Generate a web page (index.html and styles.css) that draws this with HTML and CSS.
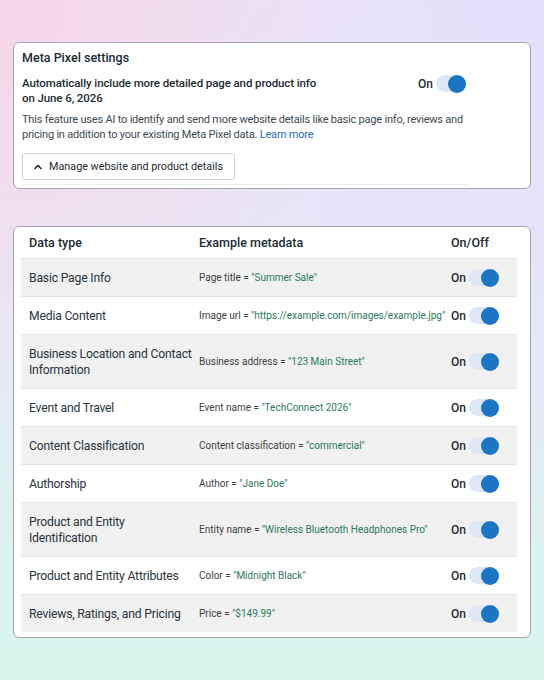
FILE: index.html
```html
<!DOCTYPE html>
<html lang="en">
<head>
    <meta charset="UTF-8">
    <meta name="viewport" content="width=device-width, initial-scale=1.0">
    <title>Meta Pixel settings</title>
    <link rel="stylesheet" href="styles.css">
</head>
<body>
    <div class="page">
        <section class="card settings">
            <h2 class="settings-title">Meta Pixel settings</h2>
            <div class="settings-body">
                <div class="feature-row">
                    <h3>Automatically include more detailed page and product info on June 6, 2026</h3>
                    <div class="switch-wrap">
                        <span class="switch-label">On</span>
                        <span class="switch"><span class="knob"></span></span>
                    </div>
                </div>
                <p class="feature-desc">This feature uses AI to identify and send more website details like basic page info, reviews and pricing in addition to your existing Meta Pixel data. <a href="#">Learn more</a></p>
                <button class="manage-btn">
                    <svg width="10" height="10" viewBox="0 0 10 10"><path d="M2 6.5 L5 3.5 L8 6.5" fill="none" stroke="#1c2b33" stroke-width="1.6" stroke-linecap="round" stroke-linejoin="round"/></svg>
                    Manage website and product details
                </button>
                <div class="settings-rule"></div>
            </div>
        </section>

        <section class="card data-table">
            <div class="row head">
                <div>Data type</div>
                <div>Example metadata</div>
                <div>On/Off</div>
            </div>
            <div class="row shaded">
                <div class="type">Basic Page Info</div>
                <div class="meta">Page title = <span class="val">"Summer Sale"</span></div>
                <div class="toggle-cell"><span class="switch-label">On</span><span class="switch"><span class="knob"></span></span></div>
            </div>
            <div class="row">
                <div class="type">Media Content</div>
                <div class="meta">Image url = <span class="val">"https://example.com/images/example.jpg"</span></div>
                <div class="toggle-cell"><span class="switch-label">On</span><span class="switch"><span class="knob"></span></span></div>
            </div>
            <div class="row shaded tall">
                <div class="type">Business Location and Contact Information</div>
                <div class="meta">Business address = <span class="val">"123 Main Street"</span></div>
                <div class="toggle-cell"><span class="switch-label">On</span><span class="switch"><span class="knob"></span></span></div>
            </div>
            <div class="row">
                <div class="type">Event and Travel</div>
                <div class="meta">Event name = <span class="val">"TechConnect 2026"</span></div>
                <div class="toggle-cell"><span class="switch-label">On</span><span class="switch"><span class="knob"></span></span></div>
            </div>
            <div class="row shaded">
                <div class="type">Content Classification</div>
                <div class="meta">Content classification = <span class="val">"commercial"</span></div>
                <div class="toggle-cell"><span class="switch-label">On</span><span class="switch"><span class="knob"></span></span></div>
            </div>
            <div class="row">
                <div class="type">Authorship</div>
                <div class="meta">Author = <span class="val">"Jane Doe"</span></div>
                <div class="toggle-cell"><span class="switch-label">On</span><span class="switch"><span class="knob"></span></span></div>
            </div>
            <div class="row shaded tall">
                <div class="type">Product and Entity Identification</div>
                <div class="meta">Entity name = <span class="val">"Wireless Bluetooth Headphones Pro"</span></div>
                <div class="toggle-cell"><span class="switch-label">On</span><span class="switch"><span class="knob"></span></span></div>
            </div>
            <div class="row">
                <div class="type">Product and Entity Attributes</div>
                <div class="meta">Color = <span class="val">"Midnight Black"</span></div>
                <div class="toggle-cell"><span class="switch-label">On</span><span class="switch"><span class="knob"></span></span></div>
            </div>
            <div class="row shaded">
                <div class="type">Reviews, Ratings, and Pricing</div>
                <div class="meta">Price = <span class="val">"$149.99"</span></div>
                <div class="toggle-cell"><span class="switch-label">On</span><span class="switch"><span class="knob"></span></span></div>
            </div>
        </section>
    </div>
</body>
</html>
```

FILE: styles.css
```css
:root {
    --text: #1c2b33;
    --muted: #3d4a52;
    --green: #2b7a5b;
    --blue: #1b74c6;
    --track: #dde8f4;
    --border: #a3a6ad;
    --shade: #f1f1f2;
}

html, body {
    margin: 0;
    height: 100%;
}

body {
    font-family: 'Roboto', sans-serif;
    color: var(--text);
    background:
        radial-gradient(ellipse at 0% 0%, #f6d6e8 0%, rgba(246, 214, 232, 0) 45%),
        radial-gradient(ellipse at 100% 0%, #e4e0fa 0%, rgba(228, 224, 250, 0) 55%),
        linear-gradient(180deg, #ece2f6 0%, #e6eaf8 45%, #daf4f0 85%, #d8f6ee 100%);
}

.page {
    padding: 42px 13px 0;
    display: flex;
    flex-direction: column;
    gap: 37px;
}

.card {
    background: #fff;
    border: 1px solid var(--border);
    border-radius: 6px;
}

/* top settings card */
.settings {
    padding: 7px 8px 3px;
}

.settings-title {
    margin: 0;
    font-size: 12.5px;
    font-weight: 500;
    line-height: 16px;
}

.settings-body {
    width: 446px;
}

.feature-row {
    display: flex;
    align-items: flex-start;
    justify-content: space-between;
    margin-top: 10px;
}

.feature-row h3 {
    margin: 0;
    width: 300px;
    font-size: 11.5px;
    font-weight: 500;
    line-height: 15px;
    letter-spacing: -0.1px;
}

.switch-wrap {
    display: flex;
    align-items: center;
    gap: 3px;
    margin-top: -1px;
    margin-right: 2px;
}

.feature-desc {
    margin: 6px -22px 0 0;
    font-size: 11px;
    line-height: 15px;
    letter-spacing: -0.2px;
    color: var(--muted);
}

.feature-desc a {
    color: #2a6db5;
    text-decoration: none;
}

.manage-btn {
    display: flex;
    align-items: center;
    gap: 6px;
    margin-top: 11px;
    height: 27px;
    padding: 0 11px 0 10px;
    background: #fff;
    border: 1px solid #cfd2d6;
    border-radius: 3px;
    font-family: inherit;
    font-size: 10.8px;
    color: var(--text);
}

.settings-rule {
    margin-top: 4px;
    height: 1px;
    background: #eceef0;
}

/* switch */
.switch-label {
    font-size: 12px;
    font-weight: 500;
}

.switch {
    position: relative;
    display: inline-block;
    width: 30px;
    height: 17px;
    border-radius: 9px;
    background: var(--track);
}

.knob {
    position: absolute;
    right: 0;
    top: -0.5px;
    width: 18px;
    height: 18px;
    border-radius: 50%;
    background: var(--blue);
}

/* data table */
.data-table {
    padding: 0 13px 5px 7px;
}

.row {
    display: grid;
    grid-template-columns: 178px 252px 1fr;
    align-items: center;
    min-height: 37px;
    border-top: 1px solid #e3e4e6;
}

.row > div:first-child {
    padding-left: 8px;
    padding-right: 5px;
}

.row.head {
    border-top: none;
    height: 31px;
    min-height: 31px;
    font-size: 12.5px;
    font-weight: 500;
}

.row.shaded {
    background: var(--shade);
}

.row.tall {
    min-height: 53px;
}

.type {
    font-size: 12.2px;
    line-height: 16px;
    letter-spacing: -0.2px;
    color: #2a353c;
}

.meta {
    font-size: 10px;
    color: #3a3f44;
    white-space: nowrap;
}

.meta .val {
    color: var(--green);
}

.toggle-cell {
    display: flex;
    align-items: center;
    gap: 3px;
}
```
